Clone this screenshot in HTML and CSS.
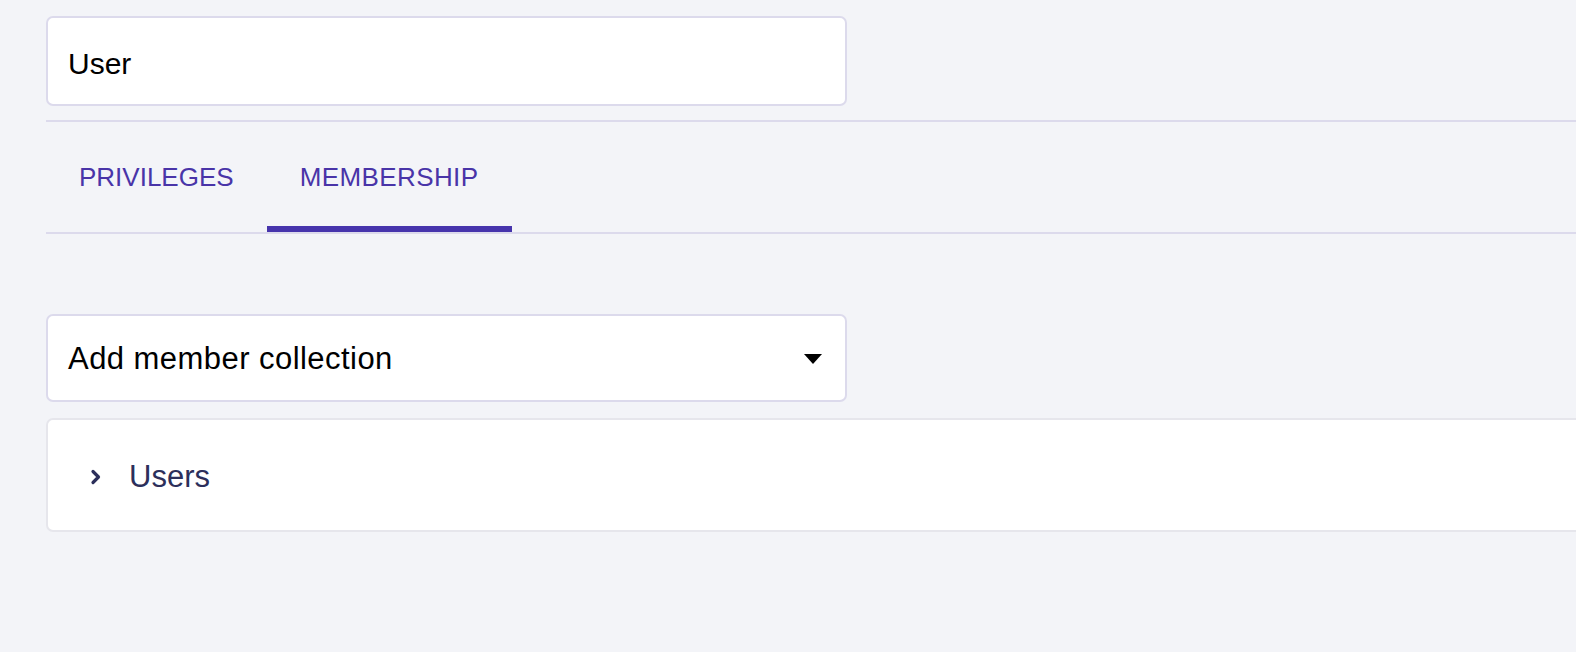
FILE: index.html
```html
<!DOCTYPE html>
<html lang="en">
<head>
    <meta charset="UTF-8">
    <meta name="viewport" content="width=device-width, initial-scale=1.0">
    <title>Role</title>
    <link rel="stylesheet" href="styles.css">
</head>
<body>
    <div class="page">
        <!-- 名称输入框 -->
        <div class="field">
            <input class="name-input" type="text" value="User">
        </div>

        <!-- 标签页 -->
        <div class="tabs">
            <a class="tab" href="javascript:;">PRIVILEGES</a>
            <a class="tab active" href="javascript:;">MEMBERSHIP</a>
        </div>

        <div class="membership">
            <div class="select">
                <span class="select-label">Add member collection</span>
                <span class="select-arrow"></span>
            </div>

            <div class="card">
                <div class="card-row">
                    <svg class="chevron" width="12" height="16" viewBox="0 0 12 16">
                        <path d="M3 2.5 L8.5 8 L3 13.5" fill="none" stroke="#2c2f5b" stroke-width="3.2" stroke-linecap="round" stroke-linejoin="round"/>
                    </svg>
                    <span class="card-title">Users</span>
                </div>
            </div>
        </div>
    </div>
</body>
</html>
```

FILE: styles.css
```css
*{
    margin: 0;
    padding: 0;
    box-sizing: border-box;
}
html,body{
    height: 100%;
}
body{
    background-color: #f3f4f8;
    font-family: "Liberation Sans", Arial, sans-serif;
    overflow: hidden;
}
.page{
    padding: 16px 0 0 46px;
    /* 内容向右溢出屏幕 */
    margin-right: -40px;
}
.field{
    padding-bottom: 14px;
}
.name-input{
    display: block;
    width: 801px;
    height: 90px;
    padding: 5px 20px 0;
    border: 2px solid #dcdaec;
    border-radius: 7px;
    background-color: #fff;
    font-family: inherit;
    font-size: 30px;
    color: #000;
    outline: none;
}
.tabs{
    display: flex;
    border-top: 2px solid #dcdaec;
    border-bottom: 2px solid #dcdaec;
}
.tab{
    display: flex;
    align-items: center;
    height: 110px;
    padding: 6px 33px 0;
    border-bottom: 6px solid transparent;
    font-size: 26px;
    color: #4934a8;
    text-decoration: none;
}
.tab.active{
    padding: 6px 34px 0 33px;
    letter-spacing: 0.4px;
    border-bottom-color: #4634ac;
}
.membership{
    padding-top: 80px;
}
.select{
    display: flex;
    align-items: center;
    justify-content: space-between;
    width: 801px;
    height: 88px;
    padding: 2px 23px 0 20px;
    border: 2px solid #dcdaec;
    border-radius: 7px;
    background-color: #fff;
}
.select-label{
    font-size: 31px;
    letter-spacing: 0.45px;
    color: #000;
}
.select-arrow{
    width: 0;
    height: 0;
    border-left: 9.5px solid transparent;
    border-right: 9.5px solid transparent;
    border-top: 10px solid #000;
}
.card{
    margin-top: 16px;
    height: 114px;
    border: 2px solid #e6e6ec;
    border-radius: 7px;
    background-color: #fff;
}
.card-row{
    display: flex;
    align-items: center;
    height: 100%;
    padding: 4px 0 0 42px;
}
.chevron{
    margin-right: 27px;
}
.card-title{
    font-size: 31px;
    color: #2c2f5b;
}
```
